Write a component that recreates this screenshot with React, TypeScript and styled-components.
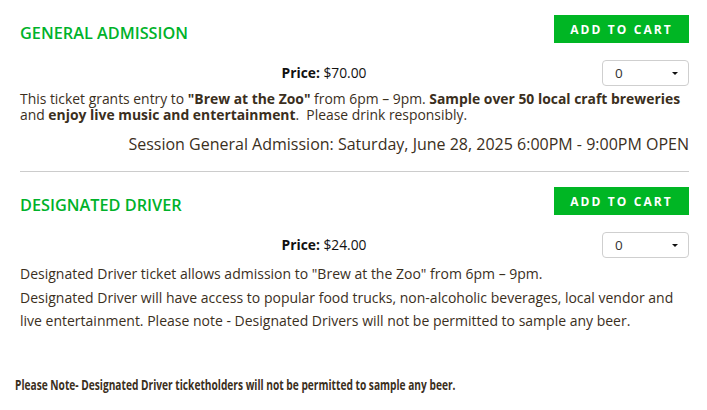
import React from "react";
import styled, { createGlobalStyle } from "styled-components";

const GlobalStyle = createGlobalStyle`
  body {
    margin: 0;
    background: #fff;
    font-family: "Open Sans", "Liberation Sans", sans-serif;
    color: #3b2f1d;
  }
`;

const Page = styled.div`
  width: 707px;
  padding: 15px 18px 0 20px;
  box-sizing: border-box;
`;

const Ticket = styled.section`
  display: flex;
  flex-direction: column;
`;

const TicketHeader = styled.div`
  display: flex;
  justify-content: space-between;
  align-items: flex-end;
`;

const TicketTitle = styled.h2`
  margin: 0;
  font-size: 16.3px;
  line-height: 19px;
  font-weight: 600;
  color: #00b22a;
`;

const CartButton = styled.button`
  width: 135px;
  height: 28px;
  border: none;
  background: #00b624;
  color: #fff;
  font-family: "Open Sans", sans-serif;
  font-weight: 700;
  font-size: 12px;
  letter-spacing: 2.1px;
  padding: 0;
  cursor: pointer;
`;

const PriceRow = styled.div`
  display: flex;
  align-items: center;
  margin-top: 17px;
`;

const Price = styled.div`
  flex: 1;
  text-align: center;
  padding-left: 26px;
  font-size: 13.8px;
  line-height: 18px;
  color: #111;
  b {
    font-weight: 700;
  }
`;

const QtySelect = styled.div`
  width: 87px;
  height: 26px;
  box-sizing: border-box;
  border: 1px solid #cfcfcf;
  border-radius: 4px;
  display: flex;
  align-items: center;
  justify-content: space-between;
  padding: 0 10px 0 12px;
  font-size: 13.5px;
  color: #333;
`;

const Caret = styled.span`
  width: 0;
  height: 0;
  border-left: 3px solid transparent;
  border-right: 3px solid transparent;
  border-top: 3.5px solid #111;
`;

const Description = styled.p<{ $lh: number; $mt: number; $size: number }>`
  margin: ${(p) => p.$mt}px 0 0;
  font-size: ${(p) => p.$size}px;
  line-height: ${(p) => p.$lh}px;
  b {
    font-weight: 700;
  }
`;

const Session = styled.div`
  margin-top: 10px;
  text-align: right;
  font-size: 16px;
  line-height: 22px;
`;

const Divider = styled.hr`
  border: none;
  border-top: 1px solid #cccccc;
  margin: 16px 0 15px;
`;

// condensed bold in the original; approximated by squeezing Open Sans
const Note = styled.p`
  margin: 41px 0 0 -5px;
  font-size: 15px;
  line-height: 20px;
  font-weight: 700;
  white-space: nowrap;
  transform: scaleX(0.678);
  transform-origin: left center;
`;

interface TicketProps {
  title: string;
  price: string;
}

const TicketTop: React.FC<TicketProps> = ({ title, price }) => (
  <>
    <TicketHeader>
      <TicketTitle>{title}</TicketTitle>
      <CartButton>ADD TO CART</CartButton>
    </TicketHeader>
    <PriceRow>
      <Price>
        <b>Price:</b> {price}
      </Price>
      <QtySelect>
        <span>0</span>
        <Caret />
      </QtySelect>
    </PriceRow>
  </>
);

export default function App() {
  return (
    <>
      <GlobalStyle />
      <Page>
        <Ticket>
          <TicketTop title="GENERAL ADMISSION" price="$70.00" />
          <Description $lh={16} $mt={5} $size={13.9}>
            This ticket grants entry to <b>"Brew at the Zoo"</b> from 6pm – 9pm.{" "}
            <b>Sample over 50 local craft breweries</b> and{" "}
            <b>enjoy live music and entertainment</b>.&nbsp; Please drink responsibly.
          </Description>
          <Session>
            Session General Admission: Saturday, June 28, 2025 6:00PM - 9:00PM OPEN
          </Session>
        </Ticket>
        <Divider />
        <Ticket>
          <TicketTop title="DESIGNATED DRIVER" price="$24.00" />
          <Description $lh={23.5} $mt={4} $size={14}>
            Designated Driver ticket allows admission to "Brew at the Zoo" from 6pm – 9pm.
            <br />
            Designated Driver will have access to popular food trucks, non-alcoholic
            beverages, local vendor and live entertainment. Please note - Designated
            Drivers will not be permitted to sample any beer.
          </Description>
          <Note>
            Please Note- Designated Driver ticketholders will not be permitted to sample
            any beer.
          </Note>
        </Ticket>
      </Page>
    </>
  );
}
